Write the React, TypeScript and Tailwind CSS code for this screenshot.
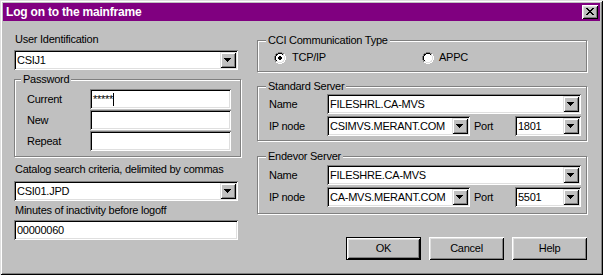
import React from "react";

type ColorMap = Record<string, string>;

function Pixels({ rows, colors, className }: { rows: string[]; colors: ColorMap; className?: string }) {
  const h = rows.length;
  const w = rows[0].length;
  const rects: React.ReactNode[] = [];
  rows.forEach((row, y) => {
    [...row].forEach((ch, x) => {
      const c = colors[ch];
      if (c) rects.push(<rect key={`${x}-${y}`} x={x} y={y} width={1} height={1} fill={c} />);
    });
  });
  return (
    <svg width={w} height={h} viewBox={`0 0 ${w} ${h}`} shapeRendering="crispEdges" className={className}>
      {rects}
    </svg>
  );
}

const RADIO = [
  "....gggg....",
  "..ggkkkkgg..",
  ".gkkwwwwklW.",
  ".gkwwwwwwlW.",
  "gkwwwddwwwlW",
  "gkwwddddwwlW",
  "gkwwddddwwlW",
  "gkwwwddwwwlW",
  ".gkwwwwwwlW.",
  ".gllwwwwllW.",
  "..WWllllWW..",
  "....WWWW....",
];

const CLOSE = [
  "kk....kk",
  ".kk..kk.",
  "..kkkk..",
  "...kk...",
  "..kkkk..",
  ".kk..kk.",
  "kk....kk",
];

const ARROW = ["kkkkkkk", ".kkkkk.", "..kkk..", "...k..."];

function Radio({ checked }: { checked: boolean }) {
  return (
    <Pixels
      rows={RADIO}
      colors={{
        g: "#808080",
        k: "#000000",
        w: "#ffffff",
        l: "#dfdfdf",
        W: "#ffffff",
        d: checked ? "#000000" : "#ffffff",
      }}
      className="block shrink-0"
    />
  );
}

function DropButton() {
  return (
    <div className="h-[16px] w-[16px] shrink-0 bg-[#c0c0c0] pl-[4px] pt-[6px] shadow-[inset_1px_1px_0_#dfdfdf,inset_-1px_-1px_0_#000,inset_2px_2px_0_#fff,inset_-2px_-2px_0_#808080]">
      <Pixels rows={ARROW} colors={{ k: "#000" }} className="block" />
    </div>
  );
}

function Combo({ value, className }: { value: string; className: string }) {
  return (
    <div
      className={`flex h-[20px] shrink-0 items-center bg-white p-[2px] shadow-[inset_1px_1px_0_#808080,inset_-1px_-1px_0_#fff,inset_2px_2px_0_#000,inset_-2px_-2px_0_#dfdfdf] ${className}`}
    >
      <span className="flex-1 overflow-hidden whitespace-nowrap pl-[1px] leading-[16px]">{value}</span>
      <DropButton />
    </div>
  );
}

function Field({ className, children }: { className: string; children?: React.ReactNode }) {
  return (
    <div
      className={`flex h-[20px] shrink-0 items-center bg-white p-[2px] pl-[3px] leading-[16px] shadow-[inset_1px_1px_0_#808080,inset_-1px_-1px_0_#fff,inset_2px_2px_0_#000,inset_-2px_-2px_0_#dfdfdf] ${className}`}
    >
      {children}
    </div>
  );
}

function Group({
  label,
  className,
  legendClass,
  children,
}: {
  label: string;
  className: string;
  legendClass: string;
  children: React.ReactNode;
}) {
  return (
    <div
      className={`relative border border-[#808080] shadow-[inset_1px_1px_0_#fff,1px_1px_0_#fff] ${className}`}
    >
      <span className={`absolute top-[-7px] bg-[#c0c0c0] px-[2px] leading-[13px] ${legendClass}`}>{label}</span>
      {children}
    </div>
  );
}

function Button({ label, isDefault }: { label: string; isDefault?: boolean }) {
  return (
    <div
      className={`flex h-[23px] w-[75px] items-center justify-center bg-[#c0c0c0] leading-[13px] ${
        isDefault
          ? "shadow-[inset_0_0_0_1px_#000,inset_2px_2px_0_#fff,inset_-2px_-2px_0_#000,inset_3px_3px_0_#dfdfdf,inset_-3px_-3px_0_#808080]"
          : "shadow-[inset_1px_1px_0_#fff,inset_-1px_-1px_0_#000,inset_2px_2px_0_#dfdfdf,inset_-2px_-2px_0_#808080]"
      }`}
    >
      {label}
    </div>
  );
}

function PwRow({ label, children }: { label: string; children?: React.ReactNode }) {
  return (
    <div className="flex items-center">
      <span className="w-[63px] leading-[13px]">{label}</span>
      <Field className="w-[141px]">{children}</Field>
    </div>
  );
}

function ServerGroup({
  title,
  name,
  ip,
  port,
  className,
}: {
  title: string;
  name: string;
  ip: string;
  port: string;
  className: string;
}) {
  return (
    <Group label={title} legendClass="left-[8px]" className={`flex flex-col gap-[2px] pl-[11px] ${className}`}>
      <div className="flex items-center">
        <span className="w-[58px] leading-[13px]">Name</span>
        <Combo className="w-[254px]" value={name} />
      </div>
      <div className="flex items-center">
        <span className="w-[58px] leading-[13px]">IP node</span>
        <Combo className="w-[143px]" value={ip} />
        <span className="ml-[4px] w-[41px] leading-[13px]">Port</span>
        <Combo className="w-[66px]" value={port} />
      </div>
    </Group>
  );
}

export default function App() {
  return (
    <div className="flex h-[275px] w-[603px] flex-col bg-[#c0c0c0] p-[3px] font-['Liberation_Sans',Arial,sans-serif] text-[11px] tracking-[-0.25px] text-black shadow-[inset_1px_1px_0_#dfdfdf,inset_-1px_-1px_0_#000,inset_2px_2px_0_#fff,inset_-2px_-2px_0_#808080]">
      <div className="flex h-[18px] shrink-0 items-center bg-[#800080] pl-[3px] pr-[2px]">
        <span className="flex-1 text-[12px] font-bold leading-[18px] tracking-[-0.2px] text-white">
          Log on to the mainframe
        </span>
        <div className="h-[14px] w-[16px] bg-[#c0c0c0] pl-[4px] pt-[3px] shadow-[inset_1px_1px_0_#fff,inset_-1px_-1px_0_#000,inset_2px_2px_0_#dfdfdf,inset_-2px_-2px_0_#808080]">
          <Pixels rows={CLOSE} colors={{ k: "#000" }} className="block" />
        </div>
      </div>

      <div className="flex pl-[11px]">
        <div className="flex w-[227px] flex-col">
          <div className="mt-[12px] pl-[1px] leading-[13px]">User Identification</div>
          <Combo className="mt-[4px] w-[224px]" value="CSIJ1" />
          <Group
            label="Password"
            legendClass="left-[6px]"
            className="mt-[9px] flex flex-col gap-[1px] pb-[5px] pl-[12px] pt-[9px]"
          >
            <PwRow label="Current">
              <span className="leading-[16px]">*****</span>
              <span className="ml-[0px] inline-block h-[13px] w-[1px] bg-black" />
            </PwRow>
            <PwRow label="New" />
            <PwRow label="Repeat" />
          </Group>
          <div className="mt-[6px] pl-[1px] leading-[13px]">Catalog search criteria, delimited by commas</div>
          <Combo className="mt-[5px] w-[224px]" value="CSI01.JPD" />
          <div className="mt-[3px] pl-[1px] leading-[13px]">Minutes of inactivity before logoff</div>
          <Field className="mt-[3px] w-[224px]">00000060</Field>
        </div>

        <div className="ml-[16px] flex w-[330px] flex-col">
          <Group
            label="CCI Communication Type"
            legendClass="left-[8px]"
            className="mt-[19px] pb-[7px] pl-[16px] pt-[10px]"
          >
            <div className="flex h-[13px] items-center">
              <div className="flex w-[148px] items-center">
                <Radio checked />
                <span className="ml-[6px] leading-[13px]">TCP/IP</span>
              </div>
              <div className="flex items-center">
                <Radio checked={false} />
                <span className="ml-[5px] leading-[13px]">APPC</span>
              </div>
            </div>
          </Group>

          <ServerGroup
            title="Standard Server"
            name="FILESHRL.CA-MVS"
            ip="CSIMVS.MERANT.COM"
            port="1801"
            className="mt-[14px] pb-[4px] pt-[7px]"
          />
          <ServerGroup
            title="Endevor Server"
            name="FILESHRE.CA-MVS"
            ip="CA-MVS.MERANT.COM"
            port="5501"
            className="mt-[15px] pb-[6px] pt-[8px]"
          />

          <div className="mt-[23px] flex justify-end gap-[8px]">
            <Button label="OK" isDefault />
            <Button label="Cancel" />
            <Button label="Help" />
          </div>
        </div>
      </div>
    </div>
  );
}
